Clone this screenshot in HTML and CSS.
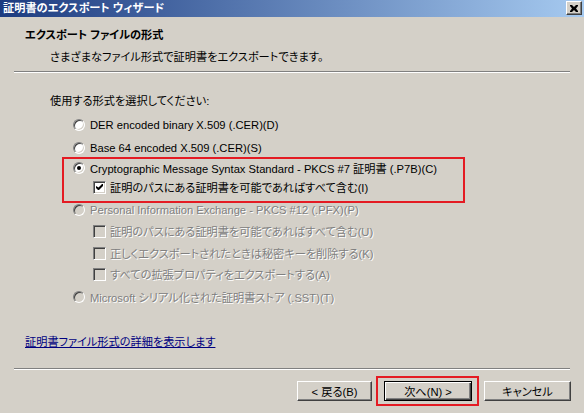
FILE: index.html
```html
<!DOCTYPE html>
<html lang="ja">
<head>
<meta charset="utf-8">
<title>証明書のエクスポート ウィザード</title>
<link rel="stylesheet" href="styles.css">
</head>
<body>
<div class="window">
  <div class="titlebar">
    <span class="title">証明書のエクスポート ウィザード</span>
    <span class="close"><svg width="8" height="7" viewBox="0 0 8 7"><path d="M0 0h2l2 2 2-2h2v1l-2 2.5 2 2.5v1h-2l-2-2-2 2h-2v-1l2-2.5-2-2.5z" fill="#000"/></svg></span>
  </div>
  <div class="head-title">エクスポート ファイルの形式</div>
  <div class="head-sub">さまざまなファイル形式で証明書をエクスポートできます。</div>
  <div class="sep sep-top"></div>
  <div class="label">使用する形式を選択してください:</div>
  <div class="options">
    <div class="row r1"><span class="radio"></span><span>DER encoded binary X.509 (.CER)(D)</span></div>
    <div class="row r2"><span class="radio"></span><span>Base 64 encoded X.509 (.CER)(S)</span></div>
    <div class="highlight">
      <div class="row"><span class="radio checked"></span><span>Cryptographic Message Syntax Standard - PKCS #7 証明書 (.P7B)(C)</span></div>
      <div class="row sub r-ci"><span class="check checked"><svg width="7" height="7" viewBox="0 0 7 7"><path d="M0 2v2l2 2h1l4-4v-2h-1l-3.5 3.5z" fill="#000"/></svg></span><span>証明のパスにある証明書を可能であればすべて含む(I)</span></div>
    </div>
    <div class="row disabled r4"><span class="radio"></span><span>Personal Information Exchange - PKCS #12 (.PFX)(P)</span></div>
    <div class="row sub disabled ru"><span class="check"></span><span>証明のパスにある証明書を可能であればすべて含む(U)</span></div>
    <div class="row sub disabled rk"><span class="check"></span><span>正しくエクスポートされたときは秘密キーを削除する(K)</span></div>
    <div class="row sub disabled ra"><span class="check"></span><span>すべての拡張プロパティをエクスポートする(A)</span></div>
    <div class="row disabled r5"><span class="radio"></span><span>Microsoft シリアル化された証明書ストア (.SST)(T)</span></div>
  </div>
  <a class="link" href="#">証明書ファイル形式の詳細を表示します</a>
  <div class="sep sep-bottom"></div>
  <div class="buttons">
    <span class="btn btn-back"><span>&lt; 戻る(B)</span></span>
    <span class="btn btn-next"><span>次へ(N) &gt;</span></span>
    <span class="btn btn-cancel"><span>キャンセル</span></span>
  </div>
</div>
</body>
</html>
```
FILE: styles.css
```css
html, body {
  margin: 0;
  padding: 0;
}
body {
  width: 584px;
  height: 413px;
  overflow: hidden;
  background: #d4d0c8;
  font-family: "Liberation Sans", "Noto Sans CJK JP", sans-serif;
  font-size: 11.2px;
  font-feature-settings: "palt";
  color: #000;
}
.window {
  display: flex;
  flex-direction: column;
  align-items: flex-start;
  width: 584px;
  height: 413px;
}
.titlebar {
  box-sizing: border-box;
  width: 100%;
  height: 17px;
  display: flex;
  align-items: flex-start;
  justify-content: space-between;
  padding: 0 2px 0 3px;
  background: linear-gradient(to right, #1c3b80, #a6caf0);
  color: #fff;
  font-weight: bold;
}
.title {
  line-height: 17px;
}
.close {
  box-sizing: border-box;
  width: 16px;
  height: 14px;
  margin-top: 1px;
  display: flex;
  align-items: center;
  justify-content: center;
  background: #d4d0c8;
  border: 1px solid;
  border-color: #fff #404040 #404040 #fff;
  box-shadow: inset -1px -1px #808080;
}
.head-title {
  margin: 10px 0 0 25px;
  line-height: 16px;
  font-weight: bold;
}
.head-sub {
  margin: 6px 0 0 50px;
  line-height: 16px;
}
.sep {
  align-self: stretch;
  margin: 0 14px;
  border-top: 1px solid #808080;
  border-bottom: 1px solid #fff;
}
.sep-top {
  margin-top: 6px;
}
.label {
  margin: 20px 0 0 50px;
  line-height: 16px;
}
.options {
  margin-left: 73px;
  display: flex;
  flex-direction: column;
}
.row {
  display: flex;
  align-items: center;
  height: 16px;
  gap: 5px;
  white-space: nowrap;
}
.row.sub {
  padding-left: 20px;
  gap: 4px;
}
.r1 { margin-top: 8px; }
.r2 { margin-top: 7px; }
.highlight {
  box-sizing: border-box;
  width: 403px;
  margin: 1px 0 0 -11px;
  padding: 1px 0 6px 9px;
  border: 2px solid #e41b23;
}
.r-ci { margin-top: 3px; }
.r4 { margin-top: -1px; }
.ru { margin-top: 5px; }
.rk { margin-top: 6px; }
.ra { margin-top: 5px; }
.r5 { margin-top: 7px; }
.radio {
  position: relative;
  flex: none;
  box-sizing: border-box;
  width: 12px;
  height: 12px;
  border-radius: 50%;
  background: #fff;
  border: 1px solid;
  border-color: #808080 #fff #fff #808080;
  box-shadow: inset 1px 1px #404040, inset -1px -1px #d4d0c8;
}
.radio.checked::after {
  content: "";
  position: absolute;
  left: 3px;
  top: 3px;
  width: 4px;
  height: 4px;
  border-radius: 50%;
  background: #000;
}
.check {
  flex: none;
  box-sizing: border-box;
  width: 13px;
  height: 13px;
  display: flex;
  align-items: center;
  justify-content: center;
  background: #fff;
  border: 1px solid;
  border-color: #808080 #fff #fff #808080;
  box-shadow: inset 1px 1px #404040, inset -1px -1px #d4d0c8;
}
.disabled {
  color: #808080;
  text-shadow: 1px 1px 0 #fff;
}
.disabled .radio,
.disabled .check {
  background: #d4d0c8;
}
.link {
  margin: 29px 0 0 25px;
  line-height: 16px;
  color: #000080;
  text-decoration: underline;
}
.sep-bottom {
  margin-top: 18px;
}
.buttons {
  align-self: stretch;
  display: flex;
  justify-content: flex-end;
  gap: 12px;
  margin-top: 11px;
  padding-right: 13px;
}
.btn {
  position: relative;
  box-sizing: border-box;
  height: 20px;
  display: flex;
  align-items: center;
  justify-content: center;
  background: #d4d0c8;
  border: 1px solid;
  border-color: #fff #404040 #404040 #fff;
  box-shadow: inset -1px -1px #808080;
}
.btn-back { width: 75px; }
.btn-next {
  width: 88px;
  border-color: #000;
  box-shadow: inset 1px 1px #fff, inset -1px -1px #404040, inset -2px -2px #808080;
}
.btn-next::after {
  content: "";
  position: absolute;
  left: -9px;
  right: -8px;
  top: -6px;
  bottom: -6px;
  border: 2px solid #e41b23;
}
.btn-cancel { width: 87px; }
```
